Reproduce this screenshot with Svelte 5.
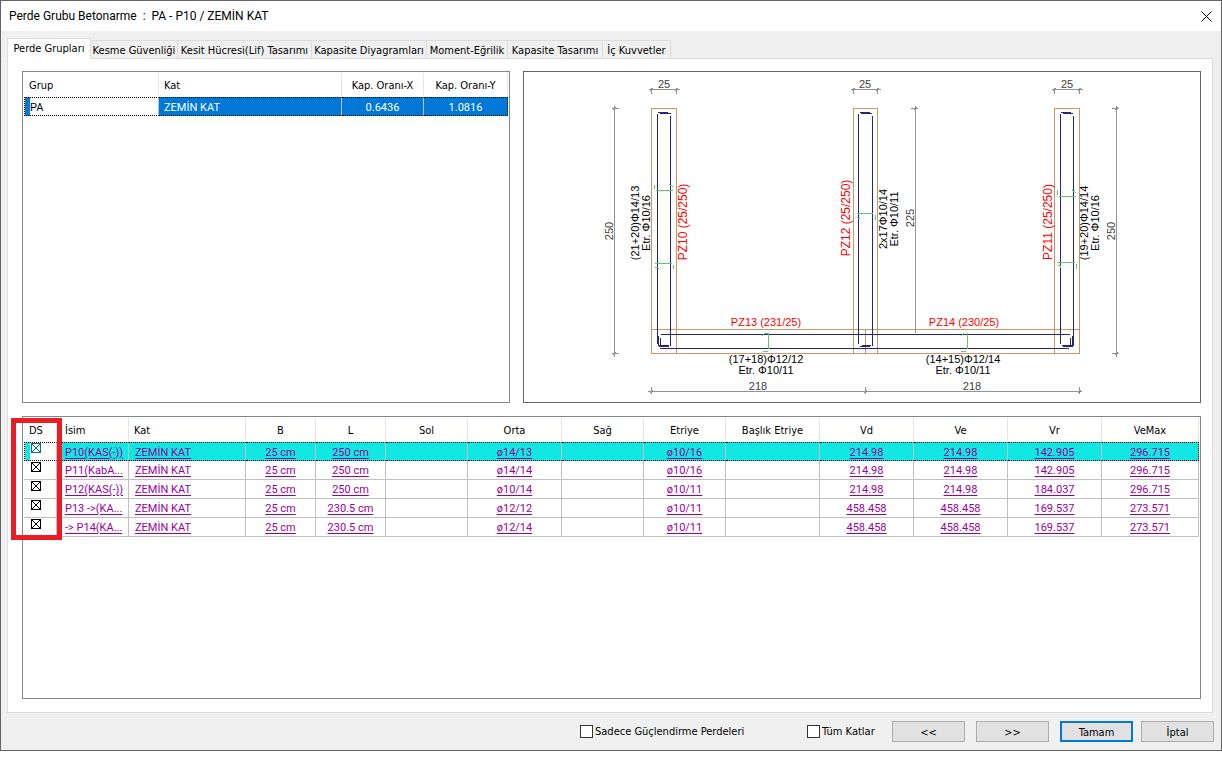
<script>
  const tabs = [
    { label: 'Perde Grupları', width: 84 },
    { label: 'Kesme Güvenliği', width: 87 },
    { label: 'Kesit Hücresi(Lif) Tasarımı', width: 134 },
    { label: 'Kapasite Diyagramları', width: 115 },
    { label: 'Moment-Eğrilik', width: 81 },
    { label: 'Kapasite Tasarımı', width: 95 },
    { label: 'İç Kuvvetler', width: 68 }
  ];
  let active = $state(0);

  const columns = [
    { label: 'B', width: 70 },
    { label: 'L', width: 70 },
    { label: 'Sol', width: 82 },
    { label: 'Orta', width: 94 },
    { label: 'Sağ', width: 82 },
    { label: 'Etriye', width: 82 },
    { label: 'Başlık Etriye', width: 94 },
    { label: 'Vd', width: 94 },
    { label: 'Ve', width: 94 },
    { label: 'Vr', width: 94 },
    { label: 'VeMax', width: 97 }
  ];

  let walls = $state([
    { on: true, name: 'P10(KAS(-))', cells: ['25 cm', '250 cm', '', 'ø14/13', '', 'ø10/16', '', '214.98', '214.98', '142.905', '296.715'] },
    { on: true, name: 'P11(KabA...', cells: ['25 cm', '250 cm', '', 'ø14/14', '', 'ø10/16', '', '214.98', '214.98', '142.905', '296.715'] },
    { on: true, name: 'P12(KAS(-))', cells: ['25 cm', '250 cm', '', 'ø10/14', '', 'ø10/11', '', '214.98', '214.98', '184.037', '296.715'] },
    { on: true, name: 'P13 ->(KA...', cells: ['25 cm', '230.5 cm', '', 'ø12/12', '', 'ø10/11', '', '458.458', '458.458', '169.537', '273.571'] },
    { on: true, name: '-> P14(KA...', cells: ['25 cm', '230.5 cm', '', 'ø12/14', '', 'ø10/11', '', '458.458', '458.458', '169.537', '273.571'] }
  ]);
  let selected = $state(0);

  let onlyRetrofit = $state(false);
  let allFloors = $state(false);
</script>

<div class="page">
  <main class="dialog">
    <header class="titlebar">
      <h1>Perde Grubu Betonarme&nbsp; :&nbsp; PA - P10 / ZEMİN KAT</h1>
      <button class="close" aria-label="Kapat">
        <svg width="11" height="11" viewBox="0 0 11 11"><path d="M0.5 0.5L10.5 10.5M10.5 0.5L0.5 10.5" stroke="#000" fill="none" /></svg>
      </button>
    </header>

    <div class="tabs" role="tablist">
      {#each tabs as tab, i}
        <button role="tab" class="tab" class:active={active === i} aria-selected={active === i} style:width="{tab.width}px" onclick={() => (active = i)}>{tab.label}</button>
      {/each}
    </div>

    <section class="panel">
      <div class="top">
        <div class="box">
          <table class="grid groups">
            <colgroup><col class="c-group" /><col /><col class="c-ratio" /><col class="c-ratio-y" /></colgroup>
            <thead>
              <tr><th class="left">Grup</th><th class="left">Kat</th><th>Kap. Oranı-X</th><th>Kap. Oranı-Y</th></tr>
            </thead>
            <tbody>
              <tr class="picked"><td class="left edit">PA</td><td class="left">ZEMİN KAT</td><td>0.6436</td><td>1.0816</td></tr>
            </tbody>
          </table>
        </div>

        <div class="canvas">
          <svg viewBox="524 72 676 330" role="img" aria-label="Perde kesiti">
            <g class="concrete">
              <path d="M651.5 353.5V108.5H676.5V353.5M853.5 353.5V108.5H877.5V353.5M1054.5 353.5V108.5H1079.5V353.5M651.5 329.5H1079.5M651.5 353.5H1079.5M865.5 329.5V353.5" />
            </g>
            <g class="bars">
              <path d="M657.5 114V344M670.5 116V346M858.5 114V344M872.5 116V346M1060.5 114V344M1073.5 116V346" />
              <path d="M658 112.5H668M660 113.5H671M860 112.5H870M861 113.5H872M1061 112.5H1071M1063 113.5H1073" />
              <path d="M658 345.5H669M659 346.5H669M862 345.5H871M860 346.5H870M1062 345.5H1073M1063 346.5H1073" />
              <path d="M658.5 336V346M660.5 338V346M1070.5 338V346M1072.5 336V346" />
              <path d="M661 334.5H1070M660 348.5H1069" />
            </g>
            <g class="ties">
              <path d="M656 190.5H673M654.5 185V189M669 184.5L673 186.5M655 263.5H672M673.5 265V269M655 267.5H657.5L659 269" />
              <path d="M857 213.5H873M875.5 215V220M857 217.5L860 219" />
              <path d="M1059 196.5H1076M1057.5 190V195M1072 190.5L1076 192.5M1058 262.5H1075M1076.5 264V269M1058 265.5H1060L1061 268" />
              <path d="M768.5 333V349M763 351.5H768M762 335.5L765 333.5H768M967.5 333V349M961 351.5H966M961 335.5L964 333.5" />
            </g>
            <g class="dims">
              <path d="M649 89.5H680M651.5 88V94M676.5 88V94M851 89.5H881M853.5 88V94M877.5 88V94M1052 89.5H1083M1054.5 88V94M1079.5 88V94" />
              <path d="M614.5 106V357M612 108.5H619M612 353.5H619M915.5 106V333M911 108.5H918M1116.5 106V357M1112 108.5H1119M1112 353.5H1119" />
              <path d="M648 391.5H1082M651.5 387V394M865.5 387V394M1079.5 387V394" />
              <path class="slash" d="M650 91L653 88M675 91L678 88M852 91L855 88M876 91L879 88M1053 91L1056 88M1078 91L1081 88M613 110L616 107M613 355L616 352M914 110L917 107M1115 110L1118 107M1115 355L1118 352M650 393L653 390M864 393L867 390M1078 393L1081 390" />
            </g>

            <g class="dim-text">
              <text x="664" y="88">25</text>
              <text x="865" y="88">25</text>
              <text x="1067" y="88">25</text>
              <text x="758" y="390">218</text>
              <text x="972" y="390">218</text>
              <text transform="translate(613 231) rotate(-90)">250</text>
              <text transform="translate(914 218) rotate(-90)">225</text>
              <text transform="translate(1115 231) rotate(-90)">250</text>
            </g>
            <g class="rebar-text">
              <text transform="translate(639 223) rotate(-90)">(21+20)Φ14/13</text>
              <text transform="translate(650 223) rotate(-90)">Etr. Φ10/16</text>
              <text transform="translate(887 219) rotate(-90)">2x17Φ10/14</text>
              <text transform="translate(898 219) rotate(-90)">Etr. Φ10/11</text>
              <text transform="translate(1088 223) rotate(-90)">(19+20)Φ14/14</text>
              <text transform="translate(1099 223) rotate(-90)">Etr. Φ10/16</text>
              <text x="766" y="363">(17+18)Φ12/12</text>
              <text x="766" y="374">Etr. Φ10/11</text>
              <text x="963" y="363">(14+15)Φ12/14</text>
              <text x="963" y="374">Etr. Φ10/11</text>
            </g>
            <g class="wall-text">
              <text x="766" y="326">PZ13 (231/25)</text>
              <text x="964" y="326">PZ14 (230/25)</text>
              <text class="tall" transform="translate(687 222) rotate(-90)">PZ10 (25/250)</text>
              <text class="tall" transform="translate(850 218) rotate(-90)">PZ12 (25/250)</text>
              <text class="tall" transform="translate(1052 222) rotate(-90)">PZ11 (25/250)</text>
            </g>
          </svg>
        </div>
      </div>

      <div class="box walls-box">
        <div class="walls-wrap">
          <table class="grid walls">
            <colgroup>
              <col class="c-ds" /><col class="c-name" /><col class="c-floor" />
              {#each columns as c}<col style:width="{c.width}px" />{/each}
            </colgroup>
            <thead>
              <tr>
                <th class="left">DS</th><th class="left name">İsim</th><th class="left">Kat</th>
                {#each columns as c}<th>{c.label}</th>{/each}
              </tr>
            </thead>
            <tbody>
              {#each walls as w, i}
                <tr class:current={selected === i} onclick={() => (selected = i)}>
                  <td class="check"><input type="checkbox" aria-label={w.name} bind:checked={w.on} /></td>
                  <td class="left name"><a href="#isim">{w.name}</a></td>
                  <td class="left"><a href="#kat">ZEMİN KAT</a></td>
                  {#each w.cells as cell}
                    <td>{#if cell}<a href="#deger">{cell}</a>{/if}</td>
                  {/each}
                </tr>
              {/each}
            </tbody>
          </table>
          <div class="marker"></div>
        </div>
      </div>
    </section>

    <footer class="actions">
      <label class="retrofit"><input type="checkbox" bind:checked={onlyRetrofit} />Sadece Güçlendirme Perdeleri</label>
      <label class="floors"><input type="checkbox" bind:checked={allFloors} />Tüm Katlar</label>
      <button class="btn">&lt;&lt;</button>
      <button class="btn">&gt;&gt;</button>
      <div class="pair">
        <button class="btn primary">Tamam</button>
        <button class="btn">İptal</button>
      </div>
    </footer>
  </main>
</div>

<style>
  :global(body) { margin: 0; background: #fff; }

  .page {
    box-sizing: border-box;
    display: flex;
    flex-direction: column;
    min-height: 100vh;
    padding-bottom: 11px;
    font-family: 'DejaVu Sans Condensed', 'DejaVu Sans', sans-serif;
    font-size: 11px;
    line-height: 14px;
    color: #000;
  }
  .dialog {
    flex: 1;
    display: flex;
    flex-direction: column;
    background: #f0f0f0;
    border: 1px solid #646464;
  }
  button, input { font: inherit; color: inherit; margin: 0; }

  .titlebar {
    display: flex;
    align-items: center;
    justify-content: space-between;
    height: 30px;
    padding: 0 9px 0 8px;
    background: #fff;
  }
  h1 {
    margin: 0;
    font: 12px/16px Roboto, 'Noto Sans', sans-serif;
  }
  .close {
    display: flex;
    padding: 0;
    border: 0;
    background: none;
  }

  .tabs {
    display: flex;
    align-items: flex-end;
    height: 28px;
    padding-left: 6px;
    position: relative;
    z-index: 1;
    margin-bottom: -1px;
  }
  .tab {
    box-sizing: border-box;
    height: 19px;
    padding: 2px 0 0;
    white-space: nowrap;
    border: 1px solid #dcdcdc;
    border-left: 0;
    background: #f0f0f0;
  }
  .tab.active {
    height: 21px;
    padding: 0;
    border-left: 1px solid #dcdcdc;
    border-bottom-color: #fff;
    background: #fff;
  }

  .panel {
    flex: 1;
    display: flex;
    flex-direction: column;
    gap: 13px;
    margin: 0 8px 0 6px;
    padding: 12px 11px 13px 14px;
    border: 1px solid #dcdcdc;
    background: #fff;
  }
  .top {
    display: grid;
    grid-template-columns: 488fr 678fr;
    gap: 13px;
  }
  .box {
    border: 1px solid #828790;
    padding: 1px;
    min-width: 0;
  }
  .canvas { border: 1px solid #646464; }
  .canvas svg { display: block; width: 100%; height: auto; }
  .walls-box { flex: 1; }

  .grid {
    width: 100%;
    border-collapse: separate;
    border-spacing: 0;
    table-layout: fixed;
  }
  th, td {
    box-sizing: border-box;
    padding: 0;
    text-align: center;
    white-space: nowrap;
    overflow: hidden;
  }
  th {
    height: 24px;
    padding-top: 2px;
    font-weight: 400;
    border-right: 1px solid #e5e5e5;
  }
  td {
    height: 19px;
    padding-top: 2px;
    font: 11px/14px Roboto, 'Noto Sans', sans-serif;
    border-right: 1px solid #c0c0c0;
    border-bottom: 1px solid #c0c0c0;
  }
  .left { text-align: left; padding-left: 5px; }

  .c-group { width: 135px; }
  .c-ratio { width: 82px; }
  .c-ratio-y { width: 84px; }
  .picked td {
    background: #0078d7;
    color: #fff;
    border-top: 1px dotted #000;
    border-bottom: 1px dotted #000;
  }
  .picked td:first-child { border-left: 1px dotted #000; }
  .picked td:last-child { border-right: 1px dotted #000; }
  .picked td.edit {
    background: linear-gradient(90deg, #0078d7 5px, #fff 5px);
    color: #000;
  }

  .walls-wrap { position: relative; }
  .c-ds { width: 33px; }
  .c-name { width: 72px; }
  .c-floor { width: 117px; }
  .left.name { padding-left: 8px; }
  .walls tbody .left:not(.name) { padding-left: 6px; }
  a { color: #990099; text-decoration: underline; text-underline-offset: 2px; }
  .current td {
    background: #12e7e3;
    border-top: 1px dotted #000;
    border-bottom: 1px dotted #000;
  }
  .current td:first-child { border-left: 1px dotted #000; }
  .current td:last-child { border-right: 1px dotted #000; }
  .check {
    padding: 1px 0 0 7px;
    text-align: left;
    vertical-align: top;
  }
  .current .check {
    background: linear-gradient(90deg, #12e7e3 5px, #fff 5px);
    color: #007878;
    padding: 0 0 0 6px;
  }
  .check input {
    appearance: none;
    display: block;
    box-sizing: border-box;
    width: 10px;
    height: 10px;
    border: 1px solid currentColor;
    background: #fff;
  }
  .check input:checked {
    background:
      linear-gradient(45deg, transparent 45%, currentColor 45% 55%, transparent 55%),
      linear-gradient(-45deg, transparent 45%, currentColor 45% 55%, transparent 55%),
      #fff;
  }
  .marker {
    position: absolute;
    left: -13px;
    top: 0;
    bottom: -3px;
    width: 51px;
    box-sizing: border-box;
    border: 5px solid #ed1c24;
    pointer-events: none;
  }

  .actions {
    display: flex;
    justify-content: flex-end;
    align-items: center;
    gap: 11px;
    padding: 8px 7px;
  }
  label { display: flex; align-items: center; gap: 2px; }
  .retrofit { width: 216px; }
  .floors { width: 74px; }
  label input {
    appearance: none;
    box-sizing: border-box;
    width: 13px;
    height: 13px;
    border: 1px solid #333;
    background: #fff;
  }
  label input:checked { background: #333; box-shadow: inset 0 0 0 2px #fff; }
  .pair { display: flex; gap: 8px; }
  .btn {
    box-sizing: border-box;
    width: 73px;
    height: 21px;
    padding: 2px 0 0;
    border: 1px solid #adadad;
    background: #e1e1e1;
  }
  .btn.primary { border: 2px solid #0078d7; }

  svg path { fill: none; shape-rendering: crispEdges; }
  .close path, .slash { shape-rendering: auto; }
  .concrete path { stroke: #cd9566; }
  .bars path { stroke: #25257f; }
  .ties path { stroke: #5fc95f; }
  .dims path { stroke: #939393; }
  text { font: 11px 'Liberation Sans', sans-serif; text-anchor: middle; }
  .dim-text text { fill: #404040; }
  .wall-text text { fill: #f00; }
  .wall-text .tall { font-size: 12px; }
</style>
